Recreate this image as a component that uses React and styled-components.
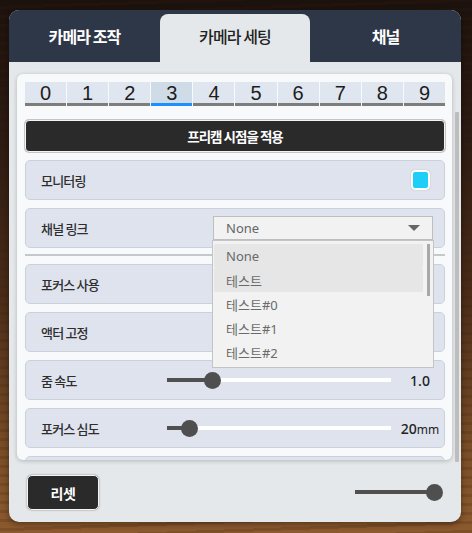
import React, { useState } from 'react';
import styled, { createGlobalStyle } from 'styled-components';

const KR = `"Noto Sans CJK KR", "Noto Sans", sans-serif`;

const GlobalStyle = createGlobalStyle`
  html, body {
    margin: 0;
    padding: 0;
  }
  body {
    width: 472px;
    height: 533px;
    overflow: hidden;
    font-family: ${KR};
    background:
      repeating-linear-gradient(178deg, rgba(0,0,0,0) 0 6px, rgba(60,30,10,0.18) 6px 9px),
      linear-gradient(to bottom, #1c120d 0%, #2b1a12 25%, #4a2c18 55%, #7a4e28 85%, #8c5a2e 100%);
  }
`;

const Page = styled.div`
  padding: 10px 11px 11px 9px;
`;

const Panel = styled.div`
  width: 452px;
  height: 512px;
  border-radius: 10px;
  overflow: hidden;
  background: #e4e8eb;
  display: flex;
  flex-direction: column;
  box-shadow: 0 2px 6px rgba(0, 0, 0, 0.4);
`;

const TabBar = styled.div`
  height: 52px;
  background: #2e3747;
  display: grid;
  grid-template-columns: 151px 150px 151px;
  align-items: end;
`;

const Tab = styled.div`
  height: 48px;
  display: flex;
  align-items: center;
  justify-content: center;
  font-size: 16px;
  letter-spacing: -0.9px;
  font-weight: ${(p) => (p.$active ? 500 : 700)};
  color: ${(p) => (p.$active ? '#222' : '#fff')};
  background: ${(p) => (p.$active ? '#e4e8eb' : 'transparent')};
  border-radius: 8px 8px 0 0;
  padding-bottom: 4px;
  box-sizing: border-box;
`;

const Body = styled.div`
  display: flex;
  padding: 12px 2px 0 8px;
  gap: 3px;
`;

const Card = styled.div`
  width: 435px;
  height: 386px;
  box-sizing: border-box;
  padding: 8px 7px 0 8px;
  background: #f7f9fb;
  border-radius: 6px;
  overflow: hidden;
  box-shadow: 0 1px 4px rgba(0, 0, 0, 0.22);
`;

const ScrollThumb = styled.div`
  width: 4px;
  height: 350px;
  margin-top: 38px;
  background: #bdbdbd;
  border-radius: 1px;
`;

const NumberRow = styled.div`
  display: grid;
  grid-template-columns: repeat(10, 1fr);
  gap: 1px;
  height: 24px;
`;

const NumberCell = styled.div`
  box-sizing: border-box;
  background: ${(p) => (p.$active ? '#cfdbe7' : '#dfe6ef')};
  border-bottom: 3px solid ${(p) => (p.$active ? '#1e8fff' : '#7d7d7d')};
  display: flex;
  align-items: center;
  justify-content: center;
  font-family: "Liberation Sans", Arial, sans-serif;
  font-size: 20px;
  color: #1c1c1c;
  line-height: 1;
  padding-top: 1px;
`;

const ApplyButton = styled.div`
  margin-top: 14px;
  height: 32px;
  box-sizing: border-box;
  background: #2a2a2a;
  border: 1px solid #f4f4f4;
  box-shadow: 0 0 0 1px #c4c4c4;
  border-radius: 4px;
  display: flex;
  align-items: center;
  justify-content: center;
  color: #fff;
  font-weight: 700;
  font-size: 13.5px;
  letter-spacing: -1px;
`;

const Rows = styled.div`
  margin-top: 8px;
  display: flex;
  flex-direction: column;
  gap: 8px;
`;

const Row = styled.div`
  position: relative;
  flex: none;
  height: 40px;
  box-sizing: border-box;
  background: #dee3ee;
  border: 1px solid #cbd1da;
  border-radius: 5px;
  display: flex;
  align-items: center;
  padding: 0 ${(p) => (p.$tight ? 0 : 14)}px 0 15px;
`;

const Label = styled.div`
  width: ${(p) => p.$width || 'auto'};
  flex: none;
  font-size: 13px;
  font-weight: 500;
  letter-spacing: -0.8px;
  color: #2e2e2e;
`;

const Spacer = styled.div`
  flex: 1;
`;

const Checkbox = styled.div`
  width: 19px;
  height: 20px;
  box-sizing: border-box;
  border: 2px solid #fff;
  border-radius: 4px;
  background: #1dcff7;
  box-shadow: 0 0 1px rgba(0, 0, 0, 0.4);
`;

const SelectWrap = styled.div`
  position: relative;
  margin-right: -3px;
`;

const SelectBox = styled.div`
  width: 220px;
  height: 24px;
  box-sizing: border-box;
  background: #f2f2f2;
  border: 1px solid #bfbfbf;
  display: flex;
  align-items: center;
  padding: 0 12px 0 12px;
  font-family: "Noto Sans", sans-serif;
  font-size: 13px;
  color: #666;
`;

const Caret = styled.div`
  margin-left: auto;
  width: 0;
  height: 0;
  border-left: 6px solid transparent;
  border-right: 6px solid transparent;
  border-top: 6px solid #666;
`;

const DropList = styled.div`
  position: absolute;
  z-index: 5;
  top: 24px;
  left: -1px;
  width: 222px;
  height: 128px;
  box-sizing: border-box;
  background: #f2f2f2;
  border: 1px solid #c4c4c4;
  padding: 3px 0 0 1px;
  display: flex;
`;

const Items = styled.div`
  width: 209px;
  display: flex;
  flex-direction: column;
`;

const Item = styled.div`
  height: 24px;
  flex: none;
  display: flex;
  align-items: center;
  padding-left: 12px;
  border-radius: 2px;
  background: ${(p) => (p.$hl ? '#e6e6e6' : 'transparent')};
  font-family: "Noto Sans", "Noto Sans CJK KR", sans-serif;
  font-size: 13px;
  color: #6a6a6a;
`;

const ListScroll = styled.div`
  width: 3px;
  height: 52px;
  margin-left: 4px;
  background: #a8a8a8;
`;

const Divider = styled.div`
  height: 2px;
  flex: none;
  margin-top: -2px;
  background: #c3c8cf;
`;

const Track = styled.div`
  position: relative;
  width: ${(p) => p.$width}px;
  height: 4px;
  background: ${(p) => p.$bg || '#fff'};
  flex: none;
`;

const Fill = styled.div`
  position: absolute;
  left: 0;
  top: 0;
  height: 4px;
  background: #505050;
`;

const Knob = styled.div`
  position: absolute;
  top: 50%;
  width: 17px;
  height: 17px;
  margin: -8.5px 0 0 -8.5px;
  border-radius: 50%;
  background: #4f4f4f;
`;

const Value = styled.div`
  margin-left: 6px;
  width: 46px;
  flex: none;
  text-align: center;
  font-family: "Noto Sans", sans-serif;
  font-size: 14px;
  font-weight: 500;
  color: #222;
  white-space: nowrap;
`;

const Unit = styled.span`
  font-size: 12px;
  font-weight: 400;
`;

const Footer = styled.div`
  flex: 1;
  display: flex;
  align-items: center;
  padding: 0 20px 0 18px;
`;

const ResetButton = styled.div`
  width: 72px;
  height: 35px;
  box-sizing: border-box;
  background: #2a2a2a;
  border: 1px solid #f4f4f4;
  box-shadow: 0 0 2px rgba(0, 0, 0, 0.45);
  border-radius: 5px;
  display: flex;
  align-items: center;
  justify-content: center;
  color: #fff;
  font-weight: 700;
  font-size: 14px;
  letter-spacing: -0.5px;
  margin-top: 1px;
`;

const Slider = ({ width, ratio, bg }) => (
  <Track $width={width} $bg={bg}>
    <Fill style={{ width: `${ratio * 100}%` }} />
    <Knob style={{ left: `${ratio * 100}%` }} />
  </Track>
);

const tabs = ['카메라 조작', '카메라 세팅', '채널'];
const options = ['None', '테스트', '테스트#0', '테스트#1', '테스트#2'];

export default function App() {
  const [tab] = useState(1);
  const [slot] = useState(3);

  return (
    <Page>
      <GlobalStyle />
      <Panel>
        <TabBar>
          {tabs.map((t, i) => (
            <Tab key={t} $active={i === tab}>
              {t}
            </Tab>
          ))}
        </TabBar>
        <Body>
          <Card>
            <NumberRow>
              {Array.from({ length: 10 }, (_, i) => (
                <NumberCell key={i} $active={i === slot}>
                  {i}
                </NumberCell>
              ))}
            </NumberRow>
            <ApplyButton>프리캠 시점을 적용</ApplyButton>
            <Rows>
              <Row>
                <Label>모니터링</Label>
                <Spacer />
                <Checkbox />
              </Row>
              <Row>
                <Label>채널 링크</Label>
                <Spacer />
                <SelectWrap>
                  <SelectBox>
                    None
                    <Caret />
                  </SelectBox>
                  <DropList>
                    <Items>
                      {options.map((o, i) => (
                        <Item key={o} $hl={i < 2}>
                          {o}
                        </Item>
                      ))}
                    </Items>
                    <ListScroll />
                  </DropList>
                </SelectWrap>
              </Row>
              <Divider />
              <Row>
                <Label>포커스 사용</Label>
              </Row>
              <Row>
                <Label>액터 고정</Label>
              </Row>
              <Row $tight>
                <Label $width="126px">줌 속도</Label>
                <Slider width={224} ratio={0.205} />
                <Value>1.0</Value>
              </Row>
              <Row $tight>
                <Label $width="126px">포커스 심도</Label>
                <Slider width={224} ratio={0.1} />
                <Value>
                  20<Unit>mm</Unit>
                </Value>
              </Row>
              <Row />
            </Rows>
          </Card>
          <ScrollThumb />
        </Body>
        <Footer>
          <ResetButton>리셋</ResetButton>
          <Spacer />
          <Slider width={86} ratio={0.92} bg="#505050" />
        </Footer>
      </Panel>
    </Page>
  );
}
